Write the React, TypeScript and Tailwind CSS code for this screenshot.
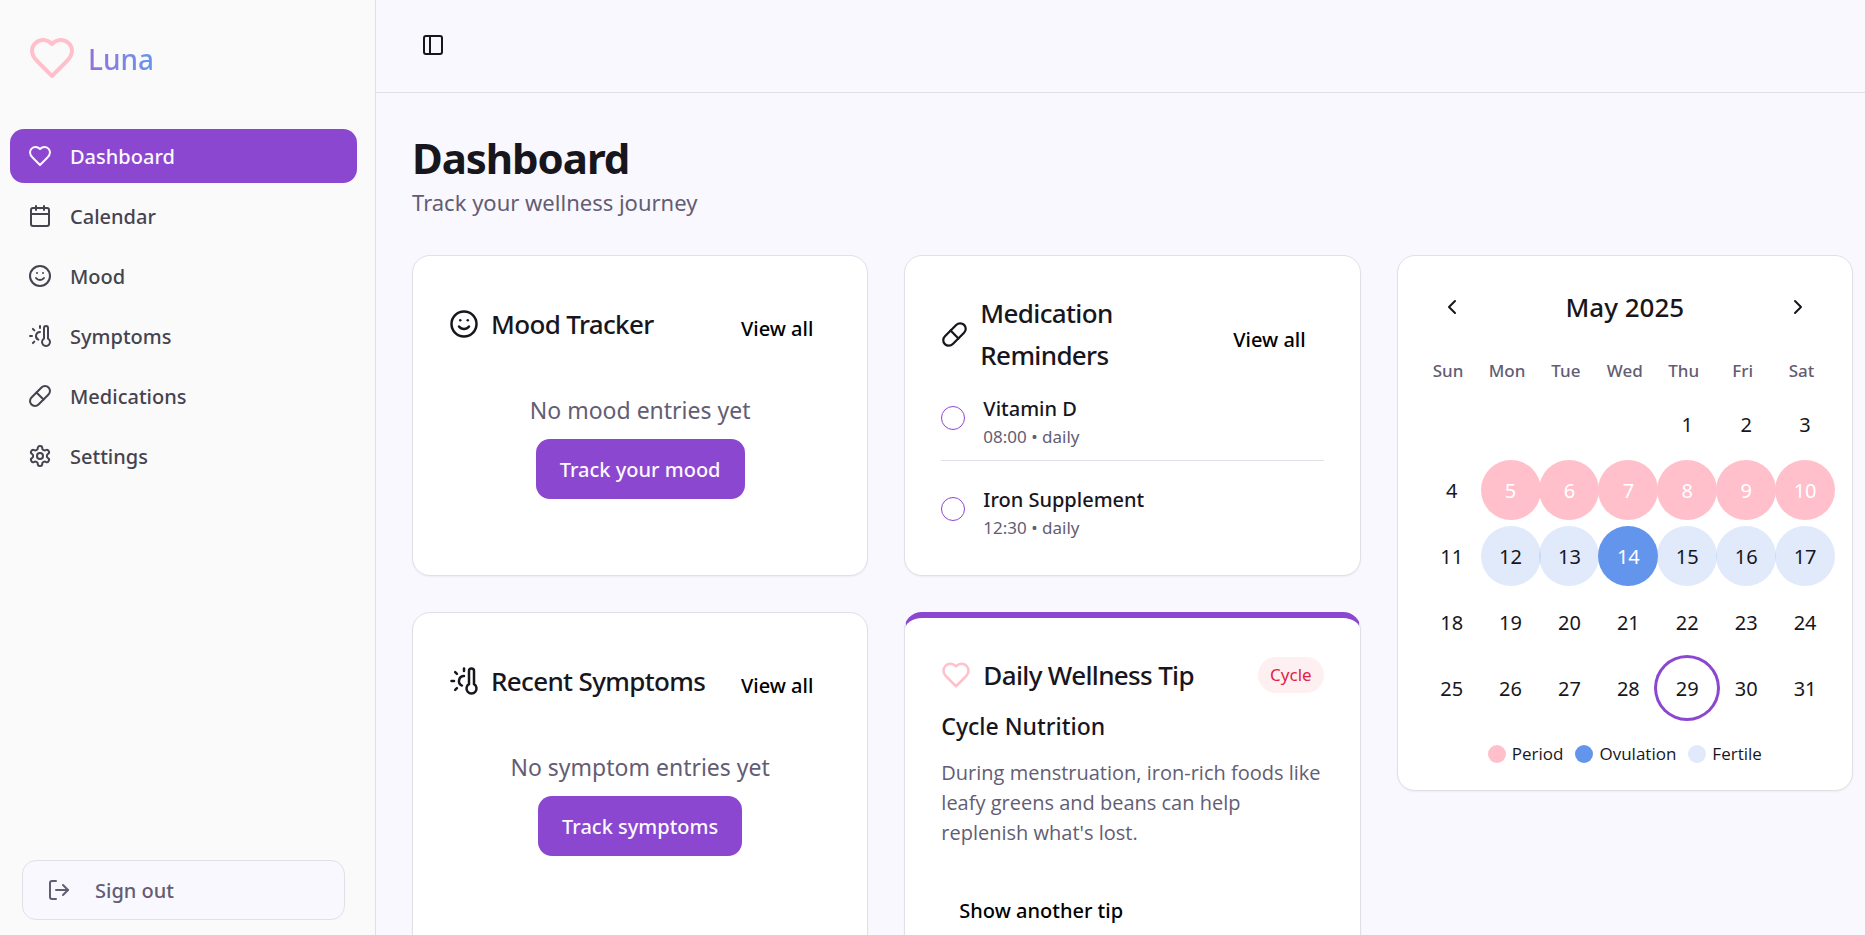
import type { ReactNode } from "react";
import {
  Calendar,
  ChevronLeft,
  ChevronRight,
  LogOut,
  PanelLeft,
  Pill,
  Smile,
  ThermometerSun,
} from "lucide-react";

type IconProps = { className?: string };

function HeartIcon({ className }: IconProps) {
  return (
    <svg viewBox="0 0 24 24" fill="none" stroke="currentColor" strokeWidth={2} strokeLinecap="round" strokeLinejoin="round" className={className} aria-hidden="true">
      <path d="M19 14c1.49-1.46 3-3.21 3-5.5A5.5 5.5 0 0 0 16.5 3c-1.76 0-3 .5-4.5 2-1.5-1.5-2.74-2-4.5-2A5.5 5.5 0 0 0 2 8.5c0 2.3 1.5 4.05 3 5.5l7 7Z" />
    </svg>
  );
}

function GearIcon({ className }: IconProps) {
  return (
    <svg viewBox="0 0 24 24" fill="none" stroke="currentColor" strokeWidth={2} strokeLinecap="round" strokeLinejoin="round" className={className} aria-hidden="true">
      <path d="M12.22 2h-.44a2 2 0 0 0-2 2v.18a2 2 0 0 1-1 1.73l-.43.25a2 2 0 0 1-2 0l-.15-.08a2 2 0 0 0-2.73.73l-.22.38a2 2 0 0 0 .73 2.73l.15.1a2 2 0 0 1 1 1.72v.51a2 2 0 0 1-1 1.74l-.15.09a2 2 0 0 0-.73 2.73l.22.38a2 2 0 0 0 2.73.73l.15-.08a2 2 0 0 1 2 0l.43.25a2 2 0 0 1 1 1.73V20a2 2 0 0 0 2 2h.44a2 2 0 0 0 2-2v-.18a2 2 0 0 1 1-1.73l.43-.25a2 2 0 0 1 2 0l.15.08a2 2 0 0 0 2.73-.73l.22-.39a2 2 0 0 0-.73-2.73l-.15-.08a2 2 0 0 1-1-1.74v-.5a2 2 0 0 1 1-1.74l.15-.09a2 2 0 0 0 .73-2.73l-.22-.38a2 2 0 0 0-2.73-.73l-.15.08a2 2 0 0 1-2 0l-.43-.25a2 2 0 0 1-1-1.73V4a2 2 0 0 0-2-2z" />
      <circle cx="12" cy="12" r="3" />
    </svg>
  );
}

const navItems = [
  { label: "Dashboard", Icon: HeartIcon, active: true },
  { label: "Calendar", Icon: Calendar, active: false },
  { label: "Mood", Icon: Smile, active: false },
  { label: "Symptoms", Icon: ThermometerSun, active: false },
  { label: "Medications", Icon: Pill, active: false },
  { label: "Settings", Icon: GearIcon, active: false },
];

const medications = [
  { name: "Vitamin D", schedule: "08:00 • daily" },
  { name: "Iron Supplement", schedule: "12:30 • daily" },
];

const weekdays = ["Sun", "Mon", "Tue", "Wed", "Thu", "Fri", "Sat"];
const weeks: (number | null)[][] = [
  [null, null, null, null, 1, 2, 3],
  [4, 5, 6, 7, 8, 9, 10],
  [11, 12, 13, 14, 15, 16, 17],
  [18, 19, 20, 21, 22, 23, 24],
  [25, 26, 27, 28, 29, 30, 31],
];

function dayStyle(day: number) {
  if (day >= 5 && day <= 10) return "bg-[#ffc0cb] text-white";
  if (day === 14) return "relative bg-[#6495ed] text-white";
  if (day >= 12 && day <= 17) return "bg-[#6495ed]/20";
  if (day === 29) return "relative ring-3 ring-[#8b47cf]";
  return "";
}

function Sidebar() {
  return (
    <aside className="flex w-94 shrink-0 flex-col border-r border-[#e1e0e7] bg-[#fafafa]">
      <div className="flex items-center gap-3 px-7 pt-[33px]">
        <HeartIcon className="size-12 text-[#ffc0cb]" />
        <span className="bg-linear-to-r from-[#9370db] to-[#6495ed] bg-clip-text pt-0.5 text-[28px] leading-12 font-medium text-transparent">
          Luna
        </span>
      </div>
      <nav className="mt-[46px] flex flex-col gap-1.5 pr-[18px] pl-[10px]">
        {navItems.map(({ label, Icon, active }) => (
          <a
            key={label}
            href="#"
            aria-current={active ? "page" : undefined}
            className={`flex h-[54px] items-center gap-[18px] rounded-[14px] px-[18px] text-[20px] font-medium ${
              active ? "bg-[#8b47cf] text-[#faf9ff]" : "text-[#454350]"
            }`}
          >
            <Icon className="size-6" />
            <span className="pt-0.5">{label}</span>
          </a>
        ))}
      </nav>
      <div className="mt-auto pr-[30px] pb-[15px] pl-[22px]">
        <button type="button" className="flex h-15 w-full items-center gap-6 rounded-[14px] border border-[#e1e0e7] bg-[#f9f8fe] px-6 text-[20px] font-medium text-[#635d73]">
          <LogOut className="size-6" />
          <span className="pt-0.5">Sign out</span>
        </button>
      </div>
    </aside>
  );
}

function Card({ className = "border-t", children }: { className?: string; children: ReactNode }) {
  return (
    <section className={`rounded-[18px] border-x border-b border-[#e1e0e7] bg-white shadow-xs ${className}`}>
      {children}
    </section>
  );
}

function CardHeader({ icon, title }: { icon: ReactNode; title: string }) {
  return (
    <div className="flex items-center justify-between">
      <h2 className="flex items-center gap-3 text-[26px] leading-[42px] font-medium tracking-tight">
        {icon}
        {title}
      </h2>
      <a href="#" className="mt-[9px] flex h-[54px] shrink-0 items-center px-[18px] pt-0.5 text-[20px] font-medium text-black">
        View all
      </a>
    </div>
  );
}

function EmptyState({ text, action }: { text: string; action: string }) {
  return (
    <div className="mt-[37px] flex flex-col items-center gap-[11px]">
      <p className="text-[23px] leading-9 text-[#635d73]">{text}</p>
      <button type="button" className="h-15 rounded-[14px] bg-[#8b47cf] px-6 pt-0.5 text-[20px] font-medium text-[#faf9ff]">
        {action}
      </button>
    </div>
  );
}

function LegendItem({ color, label }: { color: string; label: string }) {
  return (
    <li className="flex items-center gap-1.5">
      <span className={`size-[18px] rounded-full ${color}`} />
      {label}
    </li>
  );
}

function CycleCalendar() {
  return (
    <Card className="self-start border-t px-[21px] pt-[30px] pb-[22px]">
      <div className="flex items-center justify-between px-[21px]">
        <button type="button" aria-label="Previous month">
          <ChevronLeft className="size-6" />
        </button>
        <h2 className="text-[26px] leading-[42px] font-medium">May 2025</h2>
        <button type="button" aria-label="Next month">
          <ChevronRight className="size-6" />
        </button>
      </div>
      <table className="mt-7 w-full table-fixed border-collapse">
        <thead>
          <tr>
            {weekdays.map((day) => (
              <th key={day} scope="col" className="h-[38px] p-0 align-top text-[17px] leading-[29px] font-medium text-[#635d73]">
                {day}
              </th>
            ))}
          </tr>
        </thead>
        <tbody>
          {weeks.map((week, row) => (
            <tr key={row}>
              {week.map((day, column) => (
                <td key={column} className="h-[66px] p-0 pl-[3px] align-top">
                  {day !== null && (
                    <button type="button" className={`block size-15 rounded-full pt-0.5 text-[20px] ${dayStyle(day)}`}>
                      {day}
                    </button>
                  )}
                </td>
              ))}
            </tr>
          ))}
        </tbody>
      </table>
      <ul className="mt-4 flex justify-center gap-3 font-['Open_Sans','Noto_Sans',sans-serif] text-[17px] leading-7">
        <LegendItem color="bg-[#ffc0cb]" label="Period" />
        <LegendItem color="bg-[#6495ed]" label="Ovulation" />
        <LegendItem color="bg-[#6495ed]/20" label="Fertile" />
      </ul>
    </Card>
  );
}

export default function App() {
  return (
    <div className="flex h-screen overflow-hidden bg-[#f9f8fe] font-['Noto_Sans','Open_Sans',sans-serif] text-[#18161d]">
      <Sidebar />
      <div className="flex min-w-0 flex-1 flex-col overflow-y-auto [scrollbar-width:none]">
        <header className="flex h-[93px] shrink-0 items-center border-b border-[#e1e0e7] px-[45px] pb-[3px]">
          <button type="button" aria-label="Toggle sidebar">
            <PanelLeft className="size-6" />
          </button>
        </header>
        <main className="pt-[42px] pr-3 pb-9 pl-9">
          <h1 className="text-[42px] leading-[46px] font-bold tracking-tight">Dashboard</h1>
          <p className="mt-[3px] text-[22px] leading-9 text-[#635d73]">Track your wellness journey</p>
          <div className="mt-[35px] grid grid-cols-3 gap-9">
            <Card className="border-t p-9">
              <CardHeader icon={<Smile className="size-[30px] shrink-0" />} title="Mood Tracker" />
              <EmptyState text="No mood entries yet" action="Track your mood" />
            </Card>

            <Card className="border-t px-9 pt-9 pb-[34px]">
              <CardHeader icon={<Pill className="size-[27px] shrink-0" />} title="Medication Reminders" />
              <ul className="mt-[18px] flex flex-col gap-6">
                {medications.map(({ name, schedule }) => (
                  <li key={name} className="flex gap-[18px] border-[#e1e0e7] not-last:border-b not-last:pb-[10px]">
                    <button type="button" aria-label={`Mark ${name} as taken`} className="mt-3 size-6 shrink-0 rounded-full border border-[#8b47cf]" />
                    <div>
                      <p className="text-[20px] leading-[30px] font-medium">{name}</p>
                      <p className="text-[17px] leading-[26px] text-[#635d73]">{schedule}</p>
                    </div>
                  </li>
                ))}
              </ul>
            </Card>

            <div className="row-span-2 flex flex-col">
              <CycleCalendar />
            </div>

            <Card className="border-t p-9">
              <CardHeader icon={<ThermometerSun className="size-[30px] shrink-0" />} title="Recent Symptoms" />
              <EmptyState text="No symptom entries yet" action="Track symptoms" />
            </Card>

            <Card className="border-t-6 border-t-[#8b47cf] p-9">
              <div className="flex items-center justify-between">
                <h2 className="flex items-center gap-3 text-[26px] leading-[42px] font-medium tracking-tight">
                  <HeartIcon className="size-[30px] text-[#ffc0cb]" />
                  Daily Wellness Tip
                </h2>
                <span className="flex h-9 items-center rounded-full bg-[#fef0f1] px-3 text-[17px] text-[#e11d48]">Cycle</span>
              </div>
              <h3 className="mt-3 text-[23px] leading-9 font-medium">Cycle Nutrition</h3>
              <p className="mt-[14px] font-['Open_Sans','Noto_Sans',sans-serif] text-[20px] leading-[30px] text-[#635d73]">
                During menstruation, iron-rich foods like leafy greens and beans can help replenish what's lost.
              </p>
              <button type="button" className="mt-9 h-[54px] px-[18px] text-[20px] font-medium text-black">
                Show another tip
              </button>
            </Card>
          </div>
        </main>
      </div>
    </div>
  );
}
